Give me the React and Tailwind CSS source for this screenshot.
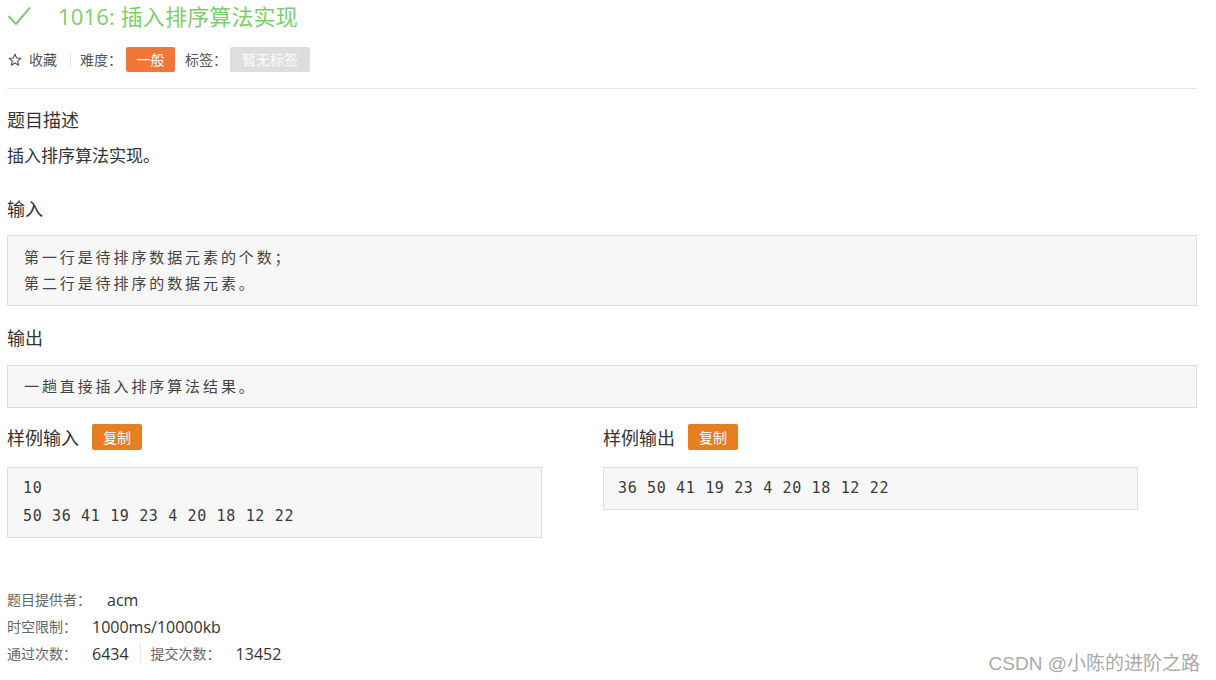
import React from "react";

const cjk = { fontFamily: '"Noto Sans CJK SC", "Noto Sans", sans-serif' };
const lat = { fontFamily: '"Open Sans", "Noto Sans CJK SC", sans-serif' };
const mono = { fontFamily: '"DejaVu Sans Mono", "Noto Sans CJK SC", monospace' };

function Heading({ children, className = "" }) {
  return (
    <div className={"h-[22px] flex items-center text-[18px] text-[#333] " + className} style={cjk}>
      {children}
    </div>
  );
}

function CopyBtn() {
  return (
    <span className="ml-[13px] inline-flex h-[26px] w-[50px] items-center justify-center rounded-[2px] bg-[#e67e22] text-[14px] text-white" style={cjk}>
      复制
    </span>
  );
}

export default function App() {
  return (
    <div className="relative h-[680px] w-[1216px] overflow-hidden bg-white">
      <div className="w-[1197px] pl-[7px]" style={cjk}>
        {/* title */}
        <div className="flex h-[32px] items-center">
          <svg width="24" height="22" viewBox="0 0 24 22">
            <polyline points="1.5,11 9,19 23,2.5" fill="none" stroke="#7fcc6e" strokeWidth="2" />
          </svg>
          <span className="ml-[27px] text-[22px] tracking-[0.15px] text-[#7fcc6e]" style={lat}>
            1016: <span style={cjk}>插入排序算法实现</span>
          </span>
        </div>

        {/* meta */}
        <div className="mt-[15px] flex h-[25px] items-center text-[14px] text-[#555]">
          <svg width="14" height="14" viewBox="0 0 24 24" className="ml-px">
            <polygon
              points="12,2 14.9,8.6 22,9.3 16.6,14 18.2,21 12,17.3 5.8,21 7.4,14 2,9.3 9.1,8.6"
              fill="none"
              stroke="#555"
              strokeWidth="2"
              strokeLinejoin="round"
            />
          </svg>
          <span className="ml-[7px]">收藏</span>
          <span className="ml-[13px] h-[18px] w-px bg-[#e8e8e8]" />
          <span className="ml-[9px]">难度：</span>
          <span className="ml-[4px] inline-flex h-[25px] w-[49px] items-center justify-center rounded-[2px] bg-[#f0763a] text-white">
            一般
          </span>
          <span className="ml-[10px]">标签：</span>
          <span className="ml-[3px] inline-flex h-[25px] w-[80px] items-center justify-center rounded-[2px] bg-[#dddddd] font-medium text-[#f8f8f8]">
            暂无标签
          </span>
        </div>

        <div className="mt-[16px] border-t border-[#e6e6e6]" />

        <Heading className="mt-[19px]">题目描述</Heading>
        <div className="mt-[14px] flex h-[22px] items-center text-[17px] text-[#333]">插入排序算法实现。</div>

        <Heading className="mt-[31px]">输入</Heading>
        <div
          className="mt-[16px] border border-[#dddddd] bg-[#f7f7f7] pb-[9px] pl-[16px] pt-[8px] text-[15px] leading-[26px] tracking-[2.9px] text-[#444]"
          style={cjk}
        >
          <div>第一行是待排序数据元素的个数；</div>
          <div>第二行是待排序的数据元素。</div>
        </div>

        <Heading className="mt-[20px]">输出</Heading>
        <div
          className="mt-[17px] border border-[#dddddd] bg-[#f7f7f7] pb-[8px] pl-[16px] pt-[7px] text-[15px] leading-[26px] tracking-[2.9px] text-[#444]"
          style={cjk}
        >
          一趟直接插入排序算法结果。
        </div>

        {/* samples */}
        <div className="mt-[16px] grid grid-cols-2">
          <div className="pr-[60px]">
            <div className="flex h-[26px] items-center">
              <span className="text-[18px] text-[#333]">样例输入</span>
              <CopyBtn />
            </div>
            <div
              className="mt-[17px] border border-[#dddddd] bg-[#f7f7f7] pb-[7px] pl-[15px] pt-[6px] text-[15px] leading-[28px] tracking-[0.65px] text-[#3a3a3a]"
              style={mono}
            >
              <div>10</div>
              <div>50 36 41 19 23 4 20 18 12 22</div>
            </div>
          </div>
          <div className="pl-[1px] pr-[59px]">
            <div className="flex h-[26px] items-center">
              <span className="text-[18px] text-[#333]">样例输出</span>
              <CopyBtn />
            </div>
            <div
              className="mt-[17px] border border-[#dddddd] bg-[#f7f7f7] pb-[7px] pl-[14px] pt-[6px] text-[15px] leading-[28px] tracking-[0.65px] text-[#3a3a3a]"
              style={mono}
            >
              <div>36 50 41 19 23 4 20 18 12 22</div>
            </div>
          </div>
        </div>

        {/* footer */}
        <div className="mt-[48px]">
          <div className="flex h-[27px] items-center">
            <span className="text-[14px] text-[#666]">题目提供者：</span>
            <span className="ml-[16px] text-[16px] text-[#333]" style={lat}>acm</span>
          </div>
          <div className="flex h-[27px] items-center">
            <span className="text-[14px] text-[#666]">时空限制：</span>
            <span className="ml-[15px] text-[16px] text-[#333]" style={lat}>1000ms/10000kb</span>
          </div>
          <div className="flex h-[27px] items-center">
            <span className="text-[14px] text-[#666]">通过次数：</span>
            <span className="ml-[15px] text-[16px] text-[#333]" style={lat}>6434</span>
            <span className="ml-[11px] h-[20px] w-px bg-[#e6e6e6]" />
            <span className="ml-[10px] text-[14px] text-[#666]">提交次数：</span>
            <span className="ml-[15px] text-[16px] text-[#333]" style={lat}>13452</span>
          </div>
        </div>
      </div>

      <div
        className="absolute right-[16px] top-[650px] text-[19px] text-[#aaaaaa]"
        style={{ fontFamily: '"Liberation Sans", "Noto Sans CJK SC", sans-serif' }}
      >
        CSDN @小陈的进阶之路
      </div>
    </div>
  );
}
